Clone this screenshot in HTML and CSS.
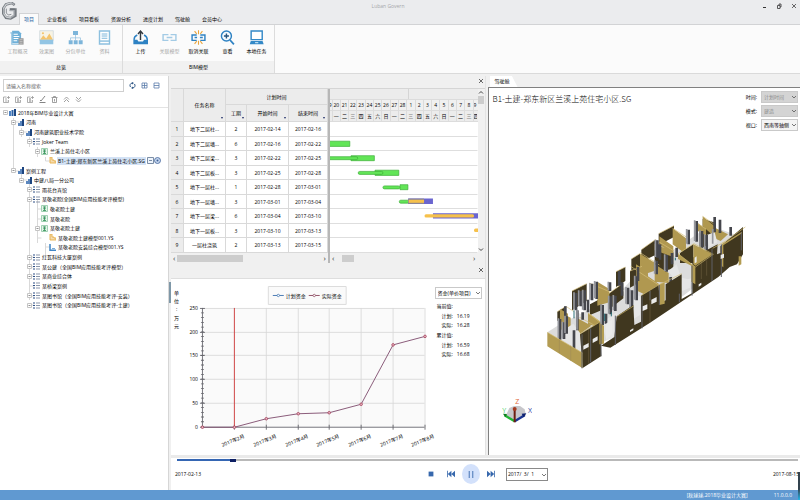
FILE: index.html
```html
<!DOCTYPE html>
<html lang="zh-CN">
<head>
<meta charset="utf-8">
<title>Luban Govern</title>
<link rel="stylesheet" href="styles.css">
</head>
<body>
<svg class="defs" width="0" height="0" aria-hidden="true">
  <defs>
    <symbol id="exp" viewBox="0 0 5 5"><path d="M.5.5h4v4h-4z" fill="#fff" stroke="#c4c4c4"/><path d="M1.500 2.500h2" stroke="#777" stroke-width=".8"/></symbol>
    <symbol id="org" viewBox="0 0 7 7"><path d="M1 4h2v3H1zM3 2h2v5H3z" fill="#5b86bd"/><path d="M5 0h2v7H5z" fill="#1d4580"/></symbol>
    <symbol id="bars" viewBox="0 0 7 7"><path d="M0 2h2v5H0z" fill="#4d83c4"/><path d="M2.500 1h2v6h-2z" fill="#2d62a6"/><path d="M5 0h2v7H5z" fill="#1c4680"/></symbol>
    <symbol id="list" viewBox="0 0 7 7"><path d="M0 1h2M0 3.500h2M0 6h2" stroke="#2c4f86" stroke-width="1.200"/><path d="M3 1h4M3 3.500h4M3 6h4" stroke="#7d8ba1" stroke-width=".9"/></symbol>
    <symbol id="unit" viewBox="0 0 7 7"><path d="M.5.5h6v6h-6z" fill="#e5f4ea" stroke="#8cc7a2" stroke-width=".8"/><path d="M2 2h3M3.500 1.500v4M2 5.500h3M2.200 3.700h2.600" stroke="#2e8f55" stroke-width=".8"/></symbol>
    <symbol id="file" viewBox="0 0 7 7"><path d="M1 0v6h6V4H5V3H3V0z" fill="currentColor" fill-opacity=".45" stroke="currentColor" stroke-width=".9"/></symbol>
    <symbol id="ell" viewBox="0 0 7 7"><path d="M1 0v6.300h6" fill="none" stroke="currentColor" stroke-width="1.500"/><path d="M3 4.500h3" stroke="currentColor" stroke-width=".7"/></symbol>
    <symbol id="down" viewBox="0 0 6 6"><path d="M1 2l2 2 2-2" fill="none" stroke="currentColor" stroke-width=".8"/></symbol>
    <symbol id="close" viewBox="0 0 6 6"><path d="M1 1l4 4M5 1L1 5" fill="none" stroke="currentColor" stroke-width=".8"/></symbol>
  </defs>
</svg>

<header class="titlebar">
  <svg class="logo" viewBox="0 0 45 54" aria-hidden="true">
    <path d="M38 9L29 3 12 7 4 19v16l8 12 14 2 14-8V23H23" fill="none" stroke="#777c82" stroke-width="8"/>
    <path d="M36 8L28 3 12 7 5 18v16l7 10 13 3 11-7V26H23" fill="none" stroke="#a9adb2" stroke-width="4"/>
    <path d="M4 20L13 7l15-5M5 35l8 11 13 2" fill="none" stroke="#e6e8ea" stroke-width="2"/>
    <path d="M13 20v13l6 6 9-2M24 21h14" fill="none" stroke="#5e6369" stroke-width="2"/>
  </svg>
  <nav class="tabs">
    <a class="tab active" href="#">项目</a><a class="tab" href="#">企业看板</a><a class="tab" href="#">项目看板</a><a class="tab" href="#">资源分析</a><a class="tab" href="#">进度计划</a><a class="tab" href="#">驾驶舱</a><a class="tab" href="#">会员中心</a>
  </nav>
  <span class="appname">Luban Govern</span>
  <div class="winbtns">
    <button aria-label="最小化"><svg viewBox="0 0 6 6"><path d="M2 4.500h3" stroke="#333" stroke-width="1"/></svg></button>
    <button aria-label="还原"><svg viewBox="0 0 6 6"><path d="M1.500 2.500h2.500v3H1.500zM3 2V1h2v3H4" fill="none" stroke="#333" stroke-width=".8"/></svg></button>
    <button aria-label="关闭"><svg viewBox="0 0 6 6"><use href="#close"/></svg></button>
  </div>
</header>

<section class="ribbon">
  <div class="group">
    <div class="tools">
      <button class="tool" disabled><svg viewBox="0 0 42 42"><path d="M6 2h18l7 7v28H6z" fill="#6fb0d8"/><path d="M1 8h4v32h20" fill="none" stroke="#8cc0e0" stroke-width="3"/><path d="M10 12h12M10 18h16M10 24h14M10 30h10" stroke="#fff" stroke-width="3"/><path d="M24 23h14v18H24z" fill="#9a9a9a"/><path d="M27 27h8M27 32h8M27 37h8" stroke="#ccc" stroke-width="2"/></svg><span>工程概况</span></button>
      <button class="tool" disabled><svg viewBox="0 0 42 42"><path d="M2 2h38v27H2z" fill="#f7f3e4" stroke="#c9d5da" stroke-width="2"/><path d="M3 27l9-12 8 9 9-14 10 17z" fill="#f4c46c"/><circle cx="11" cy="9" r="3" fill="#f4c46c"/><path d="M2 27h38v13H2z" fill="#93c5e4"/></svg><span>效果图</span></button>
      <button class="tool" disabled><svg viewBox="0 0 42 42"><path d="M14 3h14v11H14zM2 29h11v11H2zM16 29h11v11H16zM30 29h11v11H30z" fill="#7db5da"/><path d="M21 14v15M7 29v-7h28v7" fill="none" stroke="#8fbede" stroke-width="2"/></svg><span>分包单位</span></button>
      <button class="tool" disabled><svg viewBox="0 0 42 42"><path d="M7 3h28v36H7z" fill="#fff" stroke="#8dc0df" stroke-width="4"/><path d="M13 11h16M13 17h16M13 23h16" stroke="#7fb8dc" stroke-width="3"/><path d="M7 31h28" stroke="#8dc0df" stroke-width="4"/></svg><span>资料</span></button>
    </div>
    <h2>总览</h2>
  </div>
  <div class="group">
    <div class="tools">
      <button class="tool"><svg viewBox="0 0 42 42"><path d="M12 14C5 17 3 23 3 27v11h37V27c0-5-3-10-9-13" fill="none" stroke="#2e82c3" stroke-width="4"/><path d="M3 27h9l3 5h13l3-5h9v12H3z" fill="#2e82c3"/><path d="M21 28V5M14 11l7-8 7 8" fill="none" stroke="#31383f" stroke-width="4"/></svg><span>上传</span></button>
      <button class="tool" disabled><svg viewBox="0 0 42 42"><path d="M18 13H3v16h15M24 13h15v16H24M13 21h16" fill="none" stroke="#a3cbe5" stroke-width="4"/></svg><span>关联模型</span></button>
      <button class="tool"><svg viewBox="0 0 42 42"><path d="M16 14H3v15h13M26 14h13v15H26M10 21h7M25 21h8" fill="none" stroke="#2e82c3" stroke-width="4"/><path d="M21 1v11M10 3l6 8M32 3l-6 8M21 30v11M10 39l6-8M32 39l-6-8" stroke="#eaa63d" stroke-width="3"/></svg><span>取消关联</span></button>
      <button class="tool"><svg viewBox="0 0 42 42"><circle cx="18" cy="17" r="14" fill="#f6fbff" stroke="#2e82c3" stroke-width="4"/><path d="M18 10v14M11 17h14" stroke="#25547f" stroke-width="4"/><path d="M28 28l11 12" stroke="#2e82c3" stroke-width="5"/></svg><span>查看</span></button>
      <button class="tool"><svg viewBox="0 0 42 42"><path d="M6 3h31v24H6z" fill="#fff" stroke="#3489c7" stroke-width="4"/><path d="M5 31h33l3 9H2z" fill="#3489c7"/><path d="M17 34h9v3h-9z" fill="#d6eaf7"/></svg><span>本地任务</span></button>
    </div>
    <h2>BIM模型</h2>
  </div>
</section>

<main class="work">
  <aside class="side">
    <div class="search">
      <input type="text" aria-label="名称搜索" placeholder="请输入名称搜索">
      <button aria-label="刷新"><svg viewBox="0 0 7 7"><path d="M1.500 5A2.500 2.500 0 0 1 3.200 1M5.500 2A2.500 2.500 0 0 1 3.800 6" fill="none" stroke="#2d5685"/><path d="M3 0l2 1-2 1.500zM4 7L2 6l2-1.500z" fill="#2d5685"/></svg></button>
      <button aria-label="展开"><svg viewBox="0 0 7 7"><path d="M1 1h5v5H1zM3.500 1v5M1 3.500h5" fill="none" stroke="#5b7cab" stroke-width=".8"/></svg></button>
      <button aria-label="折叠"><svg viewBox="0 0 7 7"><path d="M1 1h5v5H1zM1 3.500h5" fill="none" stroke="#5b7cab" stroke-width=".8"/></svg></button>
    </div>
    <div class="edit">
      <button aria-label="新增"><svg viewBox="0 0 7 7"><path d="M.5 1v5.500h5V4M.5 1h3M2 3h2M2 5h2.500M5.500 0v3M4 1.500h3" fill="none" stroke="#9b9b9b" stroke-width=".8"/></svg></button>
      <button aria-label="新增下级"><svg viewBox="0 0 7 7"><path d="M.5 1v5.500h5V4M.5 1h3M2 3h2M2 5h2.500M3 2v4M5.500 0v3M4 1.500h3" fill="none" stroke="#9b9b9b" stroke-width=".8"/></svg></button>
      <button aria-label="导入"><svg viewBox="0 0 7 7"><path d="M.5 1v5.500h5V4M.5 1h3M2 3h2M2 5h2.500M3 2v4M5.500 0v3M4 1.500h3" fill="none" stroke="#9b9b9b" stroke-width=".8"/></svg></button>
      <button aria-label="编辑"><svg viewBox="0 0 7 7"><path d="M1 4l1 1 4-5M.5 6.500h6" fill="none" stroke="#777" stroke-width=".9"/></svg></button>
      <button aria-label="删除"><svg viewBox="0 0 7 7"><path d="M.5 1.500h6M2.500 1.500v-1h2v1M1.500 2v4.500h4V2M3.500 3v2.500" fill="none" stroke="#888" stroke-width=".8"/></svg></button>
      <button aria-label="上移"><svg viewBox="0 0 7 7"><path d="M1 3.500L3.500 1 6 3.500M1 6l2.500-2.500L6 6" fill="none" stroke="#888" stroke-width=".8"/></svg></button>
      <button aria-label="下移"><svg viewBox="0 0 7 7"><path d="M1 1l2.500 2.500L6 1M1 3.500L3.500 6 6 3.500" fill="none" stroke="#888" stroke-width=".8"/></svg></button>
    </div>
    <div class="treebox">
      <svg class="guides" viewBox="0 0 168 202" aria-hidden="true"><path d="M13.500 10v53M21.500 20v9M29.500 29v10M37.500 39v10M45.500 49v4h5M21.500 63v9M29.500 72v120M37.500 92v43M45.500 135v14M45.500 139h5M45.500 149h5M37.500 101h4M37.500 111h4M37.500 130h4M29.500 178h5M13.500 14h6M21.500 24h6M29.500 34h6M13.500 63h6M21.500 72h6M29.500 82h5M29.500 91h5M29.500 149h5M29.500 159h5M29.500 168h5M29.500 188h5M29.500 197h5"/></svg>
      <ul class="tree">
        <li class="l0"><svg class="ex"><use href="#exp"/></svg><svg class="ic"><use href="#bars"/></svg><span>2018年BIM毕业设计大赛</span></li>
        <li class="l1"><svg class="ex"><use href="#exp"/></svg><svg class="ic"><use href="#org"/></svg><span>河南</span></li>
        <li class="l2"><svg class="ex"><use href="#exp"/></svg><svg class="ic"><use href="#org"/></svg><span>河南建筑职业技术学院</span></li>
        <li class="l3"><svg class="ex"><use href="#exp"/></svg><svg class="ic"><use href="#list"/></svg><span>Joker Team</span></li>
        <li class="l4"><svg class="ex"><use href="#exp"/></svg><svg class="ic"><use href="#unit"/></svg><span>兰溪上苑住宅小区</span></li>
        <li class="l5 sel"><svg class="ex"></svg><svg class="ic gold"><use href="#file"/></svg><span>B1-土建-郑东新区兰溪上苑住宅小区.SG</span><svg class="mark" viewBox="0 0 14 7"><path d="M.5.500h6v6h-6zM2 3.500h3" fill="#eef4fc" stroke="#5d7391" stroke-width=".8"/><circle cx="10.500" cy="3.500" r="3" fill="#c7d8ef" stroke="#3d5f97" stroke-width=".8"/><circle cx="10.500" cy="3.500" r="1" fill="#3d5f97"/></svg></li>
        <li class="l1"><svg class="ex"><use href="#exp"/></svg><svg class="ic"><use href="#org"/></svg><span>案例工程</span></li>
        <li class="l2"><svg class="ex"><use href="#exp"/></svg><svg class="ic"><use href="#org"/></svg><span>中建八局一分公司</span></li>
        <li class="l3"><svg class="ex"><use href="#exp"/></svg><svg class="ic"><use href="#list"/></svg><span>雨花台宾馆</span></li>
        <li class="l3"><svg class="ex"><use href="#exp"/></svg><svg class="ic"><use href="#list"/></svg><span>某敬老院(全国BIM应用技能考评模型)</span></li>
        <li class="l4"><svg class="ex"></svg><svg class="ic"><use href="#unit"/></svg><span>敬老院土建</span></li>
        <li class="l4"><svg class="ex"></svg><svg class="ic"><use href="#unit"/></svg><span>某敬老院</span></li>
        <li class="l4"><svg class="ex"><use href="#exp"/></svg><svg class="ic"><use href="#unit"/></svg><span>某敬老院土建</span></li>
        <li class="l5"><svg class="ex"></svg><svg class="ic gold"><use href="#file"/></svg><span>某敬老院土建模型001.YS</span></li>
        <li class="l5"><svg class="ex"></svg><svg class="ic blue"><use href="#ell"/></svg><span>某敬老院安装综合模型001.YS</span></li>
        <li class="l3"><svg class="ex"><use href="#exp"/></svg><svg class="ic"><use href="#list"/></svg><span>红瓦科技大厦案例</span></li>
        <li class="l3"><svg class="ex"><use href="#exp"/></svg><svg class="ic"><use href="#list"/></svg><span>某公建（全国BIM应用技能考评模型）</span></li>
        <li class="l3"><svg class="ex"><use href="#exp"/></svg><svg class="ic"><use href="#list"/></svg><span>某商业综合体</span></li>
        <li class="l3"><svg class="ex"></svg><svg class="ic"><use href="#list"/></svg><span>某桥梁案例</span></li>
        <li class="l3"><svg class="ex"><use href="#exp"/></svg><svg class="ic"><use href="#list"/></svg><span>某图书馆（全国BIM应用技能考评-安装）</span></li>
        <li class="l3"><svg class="ex"><use href="#exp"/></svg><svg class="ic"><use href="#list"/></svg><span>某图书馆（全国BIM应用技能考评-土建）</span></li>
      </ul>
    </div>
    <i class="handle"></i>
  </aside>

  <div class="content">
    <div class="panes">
      <div class="middle">
        <div class="strip"><button aria-label="关闭"><svg viewBox="0 0 6 6"><use href="#close"/></svg></button></div>
        <div class="plan">
          <div class="tasks">
            <table>
              <colgroup><col class="c-no"><col class="c-name"><col class="c-len"><col class="c-date"><col></colgroup>
              <thead>
                <tr><th rowspan="2"></th><th rowspan="2" class="f">任务名称</th><th colspan="3">计划时间</th></tr>
                <tr><th class="f">工期</th><th class="f">开始时间</th><th class="f">结束时间</th></tr>
              </thead>
              <tbody>
                <tr><th>1</th><td>地下二层柱...</td><td>2</td><td>2017-02-14</td><td>2017-02-16</td></tr>
                <tr><th>2</th><td>地下二层墙...</td><td>6</td><td>2017-02-16</td><td>2017-02-22</td></tr>
                <tr><th>3</th><td>地下二层梁...</td><td>3</td><td>2017-02-22</td><td>2017-02-25</td></tr>
                <tr><th>4</th><td>地下二层板...</td><td>3</td><td>2017-02-25</td><td>2017-02-28</td></tr>
                <tr><th>5</th><td>地下一层柱...</td><td>1</td><td>2017-02-28</td><td>2017-03-01</td></tr>
                <tr><th>6</th><td>地下一层墙...</td><td>3</td><td>2017-03-01</td><td>2017-03-04</td></tr>
                <tr><th>7</th><td>地下一层梁...</td><td>6</td><td>2017-03-04</td><td>2017-03-10</td></tr>
                <tr><th>8</th><td>地下一层板...</td><td>3</td><td>2017-03-10</td><td>2017-03-13</td></tr>
                <tr><th>9</th><td>一层柱浇筑</td><td>2</td><td>2017-03-13</td><td>2017-03-15</td></tr>
              </tbody>
            </table>
            <div class="hscroll"><span>‹</span><i class="long"></i><span>›</span></div>
          </div>
          <div class="gantt">
            <div class="month"><span></span><span></span></div>
            <div class="days"><span>9</span><span>20</span><span>21</span><span>22</span><span>23</span><span>24</span><span>25</span><span>26</span><span>27</span><span>28</span><span>1</span><span>2</span><span>3</span><span>4</span><span>5</span><span>6</span><span>7</span><span>8</span><span>9</span></div>
            <div class="days week"><span></span><span>一</span><span>二</span><span>三</span><span>四</span><span>五</span><span>六</span><span>日</span><span>一</span><span>二</span><span>三</span><span>四</span><span>五</span><span>六</span><span>日</span><span>一</span><span>二</span><span>三</span><span>四</span></div>
            <svg class="bars" viewBox="0 0 149 131" preserveAspectRatio="none" role="img" aria-label="进度横道图">
              <path d="M0 14.500h149M0 28.500h149M0 43.500h149M0 57.500h149M0 72.500h149M0 86.500h149M0 101.500h149M0 115.500h149M0 130.500h149" stroke="#dedede"/>
              <g fill="#62e557" stroke="#3fae3a" stroke-width=".7">
                <path d="M-2 19.200h22v5.200H-2zM21.200 33.700h23.600v5H21.200zM45.500 48.200h24v5.200h-24zM70.700 62.700h8v5h-8z"/>
                <rect x="-2" y="34.700" width="30" height="3" rx="1.500"/><rect x="28.500" y="49.400" width="25" height="3" rx="1.500"/><rect x="53.500" y="63.900" width="17" height="3" rx="1.500"/><rect x="70" y="78.200" width="10" height="3" rx="1.500"/>
              </g>
              <path d="M79 76.600h25v5.400H79zM104 91.200h46v5.200h-46z" fill="#6a65cf"/>
              <path d="M79 76.600h16v5.400H79z" fill="#8c8594"/>
              <g fill="#f6c14c"><path d="M79.500 77.800h15.500v3H79.500z"/><rect x="95.500" y="92.200" width="50" height="3.300" rx="1.500"/><rect x="145.500" y="106.500" width="6" height="3.600" rx="1.500"/></g>
            </svg>
            <div class="hscroll"><span>‹</span><i class="short"></i><span>›</span></div>
          </div>
          <div class="vscroll"><svg viewBox="0 0 6 6"><path d="M1 4l2-2 2 2" fill="none" stroke="#444"/></svg><i></i><svg viewBox="0 0 6 6"><path d="M1 2l2 2 2-2" fill="none" stroke="#444"/></svg></div>
        </div>
        <div class="strip tall"><button aria-label="关闭"><svg viewBox="0 0 6 6"><use href="#close"/></svg></button></div>
        <div class="fund">
          <svg class="chart" viewBox="0 0 264 176" preserveAspectRatio="xMinYMin meet" role="img" aria-label="资金曲线">
            <path d="M31 29h223v119H31z" fill="#fafafa"/>
            <path d="M31 29.500h223M31 53.500h223M31 76.500h223M31 100.500h223M31 124.500h223M95.500 29v119M127.500 29v119M158.500 29v119M190.500 29v119M222.500 29v119M254.500 29v119" stroke="#d7d7d7" fill="none" stroke-width=".8"/>
            <path d="M31.500 29v120M29 29.500h5M29 53.500h5M29 76.500h5M29 100.500h5M29 124.500h5M29 148.500h225M63.500 146v5M95.500 146v5M127.500 146v5M158.500 146v5M190.500 146v5M222.500 146v5M254.500 146v5" stroke="#66666c" fill="none" stroke-width=".9"/>
            <path d="M31.500 31v117" stroke="#66666c" stroke-width="3" stroke-dasharray=".8 3.940" stroke-dashoffset="-2.600"/>
            <path d="M63.500 29v119" stroke="#cf4646" stroke-width="1"/>
            <path d="M31.500 148.500h32l32-8.500 32-5 31-1 32-8.500 32-59.500 32-8.500" fill="none" stroke="#7d4a6b" stroke-width=".9"/>
            <g fill="#e9b9c2" stroke="#a4405c" stroke-width=".8"><circle cx="31.500" cy="148.500" r="1.300"/><circle cx="63.500" cy="148.500" r="1.300"/><circle cx="95.500" cy="140" r="1.300"/><circle cx="127.500" cy="135" r="1.300"/><circle cx="158.500" cy="134" r="1.300"/><circle cx="190.500" cy="125.500" r="1.300"/><circle cx="222.500" cy="66" r="1.300"/><circle cx="254.500" cy="57.500" r="1.300"/></g>
            <g class="num"><text x="27" y="31">250</text><text x="27" y="55">200</text><text x="27" y="78">150</text><text x="27" y="102">100</text><text x="27" y="126">50</text><text x="27" y="150">0</text></g>
            <g class="mon"><text transform="translate(74 159) rotate(-22)">2017年2月</text><text transform="translate(106 159) rotate(-22)">2017年3月</text><text transform="translate(138 159) rotate(-22)">2017年4月</text><text transform="translate(169 159) rotate(-22)">2017年5月</text><text transform="translate(201 159) rotate(-22)">2017年6月</text><text transform="translate(233 159) rotate(-22)">2017年7月</text><text transform="translate(264 159) rotate(-22)">2017年8月</text></g>
            <path d="M97.500 7.500h78v18h-78z" fill="#fafafa" stroke="#dcdcdc"/>
            <path d="M102 16.500h11" stroke="#4d7db5"/><circle cx="107.500" cy="16.500" r="1.200" fill="#fff" stroke="#4d7db5" stroke-width=".8"/>
            <path d="M138 16.500h11" stroke="#93566a"/><circle cx="143.500" cy="16.500" r="1.200" fill="#fff" stroke="#93566a" stroke-width=".8"/>
            <text x="115" y="19">计划资金</text><text x="151" y="19">实际资金</text>
            <g class="unit"><text x="3" y="16">单</text><text x="3" y="24">位</text><text x="5" y="32">:</text><text x="3" y="41">万</text><text x="3" y="49">元</text></g>
          </svg>
          <div class="values">
            <span class="combo"><select aria-label="资金类型"><option>资金(单价项目)</option></select><svg><use href="#down"/></svg></span>
            <dl><dt>当前值:</dt><dd>计划:<b>16.19</b></dd><dd>实际:<b>16.28</b></dd><dt>累计值:</dt><dd>计划:<b>16.59</b></dd><dd>实际:<b>16.68</b></dd></dl>
          </div>
        </div>
      </div>

      <section class="cockpit">
        <div class="cktabs"><a href="#">驾驶舱</a></div>
        <div class="view">
          <div class="viewhead">
            <h1>B1-土建-郑东新区兰溪上苑住宅小区.SG</h1>
            <form class="opts">
              <label for="t1">时间:</label><span class="combo"><select id="t1" disabled><option>计划时间</option></select><svg><use href="#down"/></svg></span>
              <label for="t2">模式:</label><span class="combo"><select id="t2" disabled><option>建造</option></select><svg><use href="#down"/></svg></span>
              <label for="t3">视口:</label><span class="combo"><select id="t3"><option>西南等轴侧</option></select><svg><use href="#down"/></svg></span>
            </form>
          </div>
          <svg class="model" viewBox="0 0 645 540" role="img" aria-label="建筑模型">
            <path fill="#dcdcdc" d="M22 400L60 376 230 290 300 215 420 140 480 100 545 92 600 112 545 200 430 290 300 370 128 462z"/>
            <g fill="#413820">
              <path d="M96 276l44-22v52l-44 28zM228 218l28-14v42l-28 18zM52 338l26-16v28l-26 16zM304 152l42-30v46l-42 20zM274 180l26-16v40l-26 14zM356 104l46-24v34l-46 24zM206 284l44-32v46l-44 34zM270 216l36-14v44l-36 20zM150 316l34-18v36l-34 14zM478 98l20-8v50l-20 10zM488 60l34 10v40l-34 4zM344 140l56 20v50l-56 8z"/>
            </g>
            <g fill="#b09850">
              <path d="M60 330l24 14v66l-24-22zM80 350l12 6v50l-12-6zM172 248l36 22v40l-36 10zM144 342l40 28v16l-40-10zM110 356l44 24-34 24-12-6zM300 164l42 26v26l-42 14zM288 196l36 22v24l-36 0zM310 222l46 32v16l-46 24zM288 230l22-8v62l-22-10zM344 134l56 24v16l-56-20zM344 196l42 26v30l-42-4zM358 112l42 30v20l-42-24zM398 88l40 30v48l-40-30zM488 52l34 28v32l-34-30zM470 70l28 20v20l-28-16zM520 84l44 22-22 20-22-10z"/>
            </g>
            <g fill="none" stroke="#d6c07a" stroke-width="2"><path d="M52 338l26-16 24 16M96 276l44-22M228 218l28-14M148 252l60 26M304 152l42-30 56 34M274 180l28-18 56 36M356 104l46-24M110 350l74 40M206 284l44-32M398 88l44 28M464 68l34 22M488 52l38 26M272 202l84 56M270 216l36-14M145 342l40 30"/></g>
            <path fill="#e6e6e6" d="M62 398l38-24 26 36-2 48-62-38zM184 372l48-34v76l-32 10zM250 272l50 20v56l-24 14zM384 216l26-20 16 50 28-8-4 24-24 6zM426 236l24 6v24l-24 10zM104 336l24 12-20 14zM500 108l24-8 8 30-24 14z"/>
            <g fill="none" stroke="#45464c" stroke-width="8"><path d="M60 360v62M72 370v50M80 352v52M76 322v30M108 282v52M122 276v46M134 274v60M156 254v50M170 248v52M210 250v26M212 292v54M226 290v46M246 250v40M238 216v44M264 266v50M276 274v54M290 232v72M112 334v60M102 394v58M128 340v22M144 302v38M188 318v60M198 344v30M352 124v52M360 136v46M380 168v50M396 162v34M350 186v40M446 92v44M470 66v62M486 96v52M500 108v46M524 54v46M540 62v40M572 84v26M410 146v28M294 204v42M392 234v18"/></g>
            <g fill="none" stroke="#96979d" stroke-width="5"><path d="M55 358v60M67 368v50M75 350v52M102 280v52M116 274v46M128 272v60M150 252v50M164 246v52M205 248v26M206 290v54M220 288v46M258 264v50M270 272v54M284 230v72M111 332v60M183 316v60M346 122v52M374 166v50M344 184v40M440 90v44M464 64v62M480 94v52M494 106v46M518 90v44"/></g>
            <g fill="#40371f">
              <path d="M120 405l60-36 4 102-56 36zM183 440l40-26 7-62 50-34 3 60 20-10V290l52-32 6 54 16-8V256l48-30v74l32-18V176l76-40-2 30 10-4v-20l68-58v82l-18 30-22 8-34 30-84 56-122 82-118 74z"/>
              <path d="M420 162l40-26v56l-40 0z"/>
            </g>
            <g fill="#b39c52"><path d="M22 400l106 62v46L22 442zM178 372l14 8v54l-14 2zM358 256l16-6v64l-16 4zM414 164l52 40v52l-12-8v-48l-40-20zM460 136l58 30-52 34-6-4zM546 136l60-38v5l-56 36v66l-4-3zM596 172h8v24l-8 4z"/></g>
            <g fill="none" stroke="#d2bb70" stroke-width="2"><path d="M22 400l106 62M414 164l48-30 58 32-54 38-52-40M120 405l60-36-36-26M232 352l50-32M303 290l53-32M360 256l65-32M546 134l70-50M518 148l36-20"/></g>
            <g fill="none" stroke="#92805a" stroke-width="1"><path d="M58 420v42M92 440v46M484 190v50M500 184v46M330 276v96M146 390v104"/></g>
            <g fill="none" stroke="#5e6067" stroke-width="3"><path d="M126 406v102M152 388v102M183 376v96M226 350v88M306 290v98M330 276v28M358 258v60M418 284v26M456 200v90M516 150v96M544 136v98M604 100v54"/></g>
            <path fill="#eaeaea" d="M130 440l16-8v12l-16 8zM158 420l15-8v12l-15 8zM308 322l14-6v14l-14 6zM334 302l16-8v14l-16 8zM270 394l10-6v6l-10 5zM476 256l8-5v7l-8 5zM542 168l10-4v12l-10 4zM198 374l18-12v44l-18 16zM464 176l6-4v18l-6 3z"/>
            <path fill="none" stroke="#2a6f78" stroke-width="3" d="M102 334v24M194 344v22M214 340v12M406 176v8"/>
          </svg>
          <svg class="axes" viewBox="0 0 90 78" role="img" aria-label="坐标轴">
            <path d="M12 52l10-22 14-6 18 0 14 10 4 18-34 20z" fill="#c7c7cb"/>
            <path d="M38 70L8 52" stroke="#22b534" stroke-width="7"/><path d="M3 47l12 1-5 10z" fill="#0d7e1c"/>
            <path d="M38 70L68 52" stroke="#1b3491" stroke-width="7"/><path d="M73 46l-14 1 6 11z" fill="#0d2070"/>
            <path d="M38 73V30" stroke="#6d1e13" stroke-width="6"/><circle cx="38" cy="33" r="6" fill="#a53a20"/>
            <text x="40" y="19" fill="#e0683a">Z</text><text x="1" y="44" fill="#4fcf6b">Y</text><text x="78" y="44" fill="#2b459f">X</text>
          </svg>
        </div>
      </section>
    </div>

    <footer class="timeline">
      <input type="range" aria-label="时间轴" min="0" max="184" value="16">
      <div class="player">
        <time>2017-02-13</time>
        <div class="controls">
          <button aria-label="停止"><svg viewBox="0 0 10 10"><path d="M2 2h6v6H2z"/></svg></button>
          <button aria-label="上一步"><svg viewBox="0 0 10 10"><path d="M0 1h1v8H0zM5.500 1v8L1 5zM10 1v8L5.500 5z"/></svg></button>
          <button class="pause" aria-label="暂停"><svg viewBox="0 0 10 10"><path d="M2.500 1h1v8h-1zM6.500 1h1v8h-1z"/></svg></button>
          <button aria-label="下一步"><svg viewBox="0 0 10 10"><path d="M9 1h1v8H9zM4.500 1v8L9 5zM0 1v8l4.500-4z"/></svg></button>
          <span class="combo"><select aria-label="日期"><option>2017/&nbsp; 3/&nbsp; 1</option></select><svg><use href="#down"/></svg></span>
        </div>
        <time>2017-08-15</time>
      </div>
    </footer>
  </div>
</main>

<div class="status"><span>[秋球球,2018毕业设计大赛]</span><span>11.0.0.0</span><i class="dock"></i></div>
</body>
</html>
```
FILE: styles.css
```css
* { box-sizing: border-box; }

body {
  margin: 0;
  min-height: 100vh;
  display: flex;
  flex-direction: column;
  overflow: hidden;
  background: #f0f0f0;
  color: #000;
  font: 5px/8px "Open Sans", "Noto Sans CJK SC", sans-serif;
}

.defs { position: absolute; }
button, input, select { font: inherit; color: inherit; }
button { border: 0; padding: 0; background: none; display: flex; align-items: center; justify-content: center; }
a { color: inherit; text-decoration: none; }
h1, h2, ul, dl, dd { margin: 0; padding: 0; font-weight: normal; }

.titlebar {
  position: relative;
  height: 25px;
  display: flex;
  align-items: flex-end;
  background: #ebecee;
  border-bottom: 1px solid #d2d3d5;
}
.logo { width: 15px; height: 18px; margin: 0 2px 4px 2px; }
.tabs { display: flex; margin-bottom: -1px; }
.tab { height: 12px; padding: 2px 6px; border: 0 solid #d2d3d5; }
.tab.active { padding: 1px 4px; margin-right: 2px; border-width: 1px 1px 0; background: #fbfbfb; color: #1f5c9d; }
.appname { position: absolute; left: 0; right: 24px; top: 2px; text-align: center; color: #a5a7aa; }
.winbtns { margin: 0 3px 15px auto; display: flex; gap: 9px; }
.winbtns svg, .strip svg { width: 6px; height: 6px; color: #444; }

.ribbon { display: flex; height: 49px; background: #fbfbfb; border-bottom: 1px solid #dadada; }
.group { display: flex; flex-direction: column; border-right: 1px solid #dcdcdc; }
.tools { display: flex; flex: 1; padding: 0 3px; }
.tool { width: 29px; flex-direction: column; justify-content: flex-start; gap: 2px; padding-top: 5px; line-height: 8px; white-space: nowrap; }
.tool svg { width: 15px; height: 15px; }
.tool:disabled { color: #a8a8a8; }
.group h2 { height: 12px; background: #f1f1f1; text-align: center; font-size: 5px; line-height: 12px; }

.work { flex: 1; display: flex; border-top: 2px solid #f0f0f0; }
.side { position: relative; width: 169px; background: #fff; border-right: 1px solid #d6d6d6; }
.search { display: flex; align-items: center; gap: 5px; padding: 3px 8px 0 3px; }
.search input { flex: 1; min-width: 0; height: 13px; padding: 0 2px; border: 1px solid #cfcfcf; }
.search input::placeholder { color: #666; }
.search svg { width: 7px; height: 7px; }
.edit { display: flex; gap: 5px; padding: 4px 3px; height: 16px; border-bottom: 1px solid #e3e3e3; }
.edit svg { width: 7px; height: 7px; }
.treebox { position: relative; }
.guides { position: absolute; left: 0; top: 0; width: 168px; height: 202px; fill: none; stroke: #d9d9d9; stroke-width: 1; }
.tree { position: relative; height: 202px; display: grid; grid-auto-rows: 1fr; list-style: none; }
.tree li { display: flex; align-items: center; gap: 1px; white-space: nowrap; }
.tree span { padding: 0 1px; }
.l0 { padding-left: 3px; }
.l1 { padding-left: 11px; }
.l2 { padding-left: 19px; }
.l3 { padding-left: 27px; }
.l4 { padding-left: 35px; }
.l5 { padding-left: 43px; }
.ex { width: 5px; height: 5px; flex: none; }
.ic { width: 7px; height: 7px; flex: none; }
.gold { color: #e8b04b; }
.blue { color: #3f86c6; }
.sel span { background: #d3e2f5; }
.mark { width: 14px; height: 7px; flex: none; }
.handle { position: absolute; right: -3px; top: 206px; width: 2px; height: 21px; background: #7f98a8; }

.content { flex: 1; min-width: 0; padding-left: 2px; display: flex; flex-direction: column; }
.panes { flex: 1; display: grid; grid-template-columns: minmax(0, 1fr) minmax(0, 1fr); }
.middle { display: flex; flex-direction: column; border-right: 1px solid #e3e3e3; }
.strip { height: 12px; display: flex; align-items: center; justify-content: flex-end; padding: 0 1px 2px 0; }
.strip.tall { height: 16px; border-bottom: 1px solid #dedede; }

.plan { display: flex; height: 175px; border-top: 1px solid #d5d5d5; }
.tasks { width: 159px; border-right: 2px solid #b7b7b7; }
.tasks table { width: 100%; table-layout: fixed; border-collapse: separate; border-spacing: 0; text-align: center; background: #fff; }
.tasks th, .tasks td { padding: 0; height: 15px; line-height: 8px; font-weight: normal; border: 0 solid #d9d9d9; border-width: 0 1px 1px 0; white-space: nowrap; overflow: hidden; }
.tasks tr:nth-child(even) > * { height: 14px; }
.tasks th { background: #ececec; }
.tasks thead tr:first-child > * { height: 16px; }
.tasks thead tr:last-child > * { height: 17px; }
.c-no { width: 13px; }
.c-name { width: 42px; }
.c-len { width: 21px; }
.c-date { width: 42px; }
.f { position: relative; }
.f::after { content: ""; position: absolute; right: 2px; bottom: 2px; border: 1px solid transparent; border-top: 2px solid #1d2b66; border-bottom: 0; }

.hscroll { height: 10px; display: flex; align-items: center; padding: 0 2px; gap: 2px; color: #333; font-size: 8px; }
.hscroll span:last-child { margin-left: auto; }
.hscroll i { height: 7px; background: #cdcdcd; }
.long { width: 66px; }
.short { width: 12px; margin-left: 6px; }
.gantt { flex: 1; min-width: 0; display: flex; flex-direction: column; }
.month { height: 11px; display: grid; grid-template-columns: 78fr 70fr; background: #ececec; border-bottom: 1px solid #dcdcdc; }
.month span + span { border-left: 1px solid #d5d5d5; }
.days { height: 11px; display: grid; grid-template-columns: 21fr repeat(17, 67fr) 32fr; line-height: 11px; background: #f0f0f0; border-bottom: 1px solid #dcdcdc; }
.days span { min-width: 0; overflow: hidden; display: flex; justify-content: center; border-right: 1px solid #dcdcdc; }
.days span:first-child { justify-content: flex-end; }
.days span:last-child { justify-content: flex-start; border: 0; }
.bars { width: 100%; height: 131px; display: block; background: #fff; }
.week { background: #ececec; }
.vscroll { width: 7px; display: flex; flex-direction: column; align-items: center; padding-bottom: 10px; }
.vscroll i { width: 6px; height: 8px; background: #cdcdcd; }
.vscroll svg { width: 6px; height: 7px; }
.vscroll svg:last-child { margin-top: auto; }

.fund { flex: 1; display: flex; background: #fff; }
.chart { flex: 1; min-width: 0; height: 176px; fill: #000; }
.num text { text-anchor: end; }
.mon text { text-anchor: end; }
.values { width: 50px; padding: 8px 3px 0 0; }
.combo { position: relative; display: block; }
.combo select { appearance: none; display: block; width: 100%; height: 12px; padding: 0 7px 0 2px; border: 1px solid #c9c9c9; border-radius: 0; background: #fff; line-height: 8px; opacity: 1; }
.combo svg { position: absolute; right: 1px; top: 3px; width: 6px; height: 6px; color: #555; pointer-events: none; }
.values dl { padding: 2px 0 0 2px; line-height: 9px; }
.values dt { line-height: 11px; }
.values dd { padding-left: 5px; }
.values b { margin-left: 4px; font-weight: normal; }

.cockpit { display: flex; flex-direction: column; padding-left: 2px; }
.cktabs { display: flex; height: 11px; padding-left: 2px; }
.cktabs a { padding: 1px 8px 0 5px; background: #fff; clip-path: polygon(0 0, 80% 0, 100% 100%, 0 100%); }
.view { flex: 1; display: flex; flex-direction: column; background: #fff; border: solid #808080; border-width: 1px 0 0 1px; }
.viewhead { display: flex; justify-content: space-between; padding: 3px 2px 0 4px; }
.viewhead h1 { font-family: "Noto Sans CJK SC", sans-serif; font-size: 8px; font-weight: 300; line-height: 16px; }
.opts { display: grid; grid-template-columns: auto 37px; gap: 2px 4px; align-items: center; }
.opts select { background: #f4f4f4; }
.opts select:disabled { background: #d4d4d4; color: #8d8d8d; }
.model { width: 215px; height: 180px; margin: 68px 0 0 51px; }
.axes { width: 30px; height: 26px; margin: 19px 0 0 13px; }
.axes text { font-size: 21px; }

.timeline { height: 35px; border-top: 3px solid #eaeaea; background: #fff; }
.timeline input { appearance: none; display: block; width: calc(100% - 8px); height: 2px; margin: 1px 2px 0 6px; background: linear-gradient(to right, #3566b3 9%, #b9b9b9 9%); }
.timeline input::-webkit-slider-thumb { appearance: none; width: 6px; height: 3px; background: #0d1f63; }
.player { display: flex; align-items: center; justify-content: space-between; padding: 3px 1px 0 4px; }
.controls { display: flex; align-items: center; gap: 10px; }
.controls svg { width: 10px; height: 8px; fill: #3768ad; }
.controls .combo { width: 42px; }
.controls .combo select { height: 13px; border-color: #8a8a8a; padding-left: 1px; }
.controls .combo svg { width: 6px; height: 6px; top: 4px; }
.controls .pause { width: 18px; height: 20px; margin: 0 -4px; border-radius: 50%; background: #d3e1fb; }
.controls .pause svg { height: 9px; }

.status { position: relative; height: 10px; display: flex; justify-content: flex-end; gap: 26px; padding: 0 8px; background: #6099d1; color: #fff; line-height: 11px; }
.dock { position: absolute; right: 0; bottom: 0; width: 2px; height: 28px; background: linear-gradient(#33424e 60%, #23b5e8); }
```
